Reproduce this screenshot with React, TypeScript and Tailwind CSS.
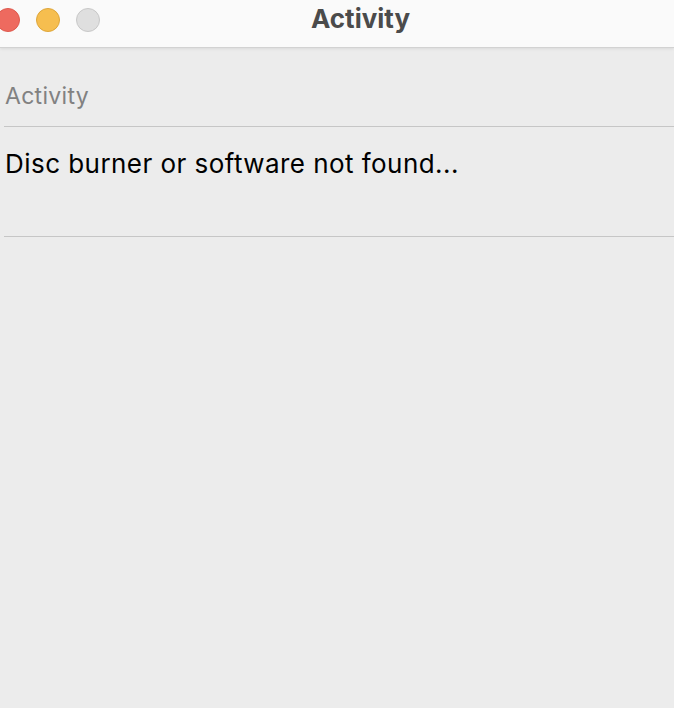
const font = { fontFamily: "Inter, 'Noto Sans', sans-serif" };

function TrafficLights() {
  return (
    <div className="flex items-center gap-4 -ml-1 pt-2">
      <span className="h-6 w-6 rounded-full border border-[#de5a4e] bg-[#ee6a5f]" />
      <span className="h-6 w-6 rounded-full border border-[#dea63a] bg-[#f6be4f]" />
      <span className="h-6 w-6 rounded-full border border-[#c8c8c8] bg-[#dfdfdf]" />
    </div>
  );
}

export default function App() {
  return (
    <div className="flex h-[708px] w-[674px] flex-col overflow-hidden bg-[#ececec]" style={font}>
      <header className="relative z-10 flex h-[48px] shrink-0 items-start border-b border-[#d2d2d2] bg-[#fafafa] shadow-[0_1px_3px_rgba(0,0,0,0.08)]">
        <TrafficLights />
        <h1 className="absolute left-[311px] top-[2px] text-[26px] font-bold leading-[34px] text-[#4b4b4b]">
          Activity
        </h1>
      </header>
      <div className="pl-1">
        <div className="flex h-[79px] items-end border-b border-[#c6c6c6] pb-[15px] pl-px">
          <span className="text-[23px] leading-[30px] tracking-[0.3px] text-[#818181]">Activity</span>
        </div>
        <div className="h-[110px] border-b border-[#c6c6c6] pt-[21px] pl-px">
          <p className="text-[26px] leading-[32px] tracking-[0.45px] text-black">Disc burner or software not found...</p>
        </div>
      </div>
    </div>
  );
}
